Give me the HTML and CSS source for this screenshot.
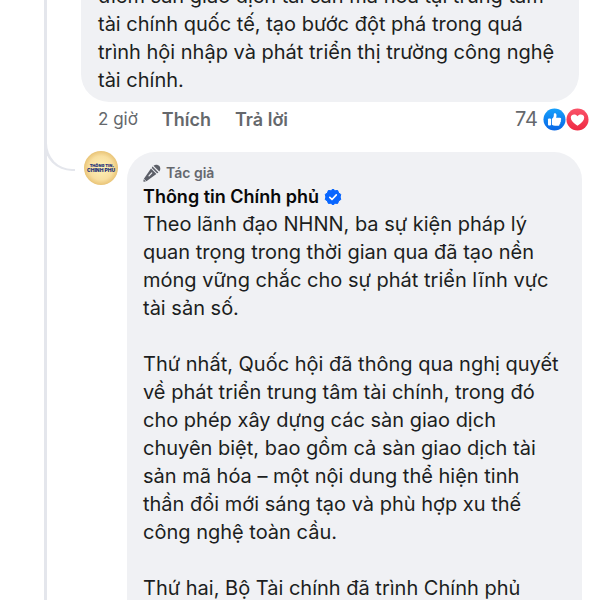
FILE: index.html
```html
<!DOCTYPE html>
<html lang="vi">
<head>
<meta charset="utf-8">
<meta name="viewport" content="width=device-width, initial-scale=1">
<title>Bình luận</title>
<link rel="stylesheet" href="styles.css">
</head>
<body>
<main class="thread">
  <article class="comment">
    <div class="bubble bubble-parent">
      <p class="text">điểm sàn giao dịch tài sản mã hóa tại trung tâm<br>tài chính quốc tế, tạo bước đột phá trong quá<br>trình hội nhập và phát triển thị trường công nghệ<br>tài chính.</p>
    </div>
    <footer class="actions">
      <time class="time">2 giờ</time>
      <button class="action" type="button">Thích</button>
      <button class="action" type="button">Trả lời</button>
      <div class="reactions">
        <span class="count">74</span>
        <svg class="reaction" viewBox="0 0 24 24" aria-hidden="true">
          <defs><linearGradient id="like" x1="0" y1="0" x2="0" y2="1"><stop offset="0" stop-color="#16a0fb"/><stop offset="1" stop-color="#0866e6"/></linearGradient></defs>
          <circle cx="12" cy="12" r="11.5" fill="url(#like)"/>
          <rect x="5.2" y="11" width="3.2" height="7.2" rx="1" fill="#fff"/>
          <path fill="#fff" d="M9.3 11.3c1.7-1.1 2-2.4 2-4.6 0-1.6 2.8-1.6 2.8 1 0 1-.2 1.7-.5 2.5h3.9c1.7 0 2 1.700.9 2.400.7.8.5 1.900-.4 2.300.4.8 0 1.700-.8 2 .3 1-.4 1.600-1.400 1.600h-3.200c-1.400 0-2.300-.3-3.300-.9z"/>
        </svg>
        <svg class="reaction" viewBox="0 0 24 24" aria-hidden="true">
          <defs><linearGradient id="love" x1="0" y1="0" x2="0" y2="1"><stop offset="0" stop-color="#fa5369"/><stop offset="1" stop-color="#ee2942"/></linearGradient></defs>
          <circle cx="12" cy="12" r="11.5" fill="url(#love)"/>
          <path fill="#fff" d="M12 18.500C7.800 15.800 5 13.200 5 10c0-3.800 5.200-4.500 7-1.300C13.800 5.500 19 6.200 19 10c0 3.200-2.800 5.800-7 8.500z"/>
        </svg>
      </div>
    </footer>
  </article>

  <article class="reply">
    <svg class="avatar" viewBox="0 0 36 36" role="img" aria-label="Thông tin Chính phủ">
      <defs><radialGradient id="gold"><stop offset="0" stop-color="#fff2b8"/><stop offset=".7" stop-color="#f8dfa0"/><stop offset="1" stop-color="#e9c477"/></radialGradient></defs>
      <circle cx="18" cy="18" r="17" fill="url(#gold)"/>
      <text class="logo-small" x="18" y="17" text-anchor="middle">THÔNG TIN</text>
      <text class="logo-large" x="18" y="22" text-anchor="middle">CHÍNH PHỦ</text>
    </svg>
    <div class="bubble bubble-reply">
      <div class="badge">
        <svg class="mic" viewBox="0 0 18 18" aria-hidden="true">
          <g fill="#5c5f68"><path d="M8 4.600 13.400 10 3.400 17.200.9 14.700z"/><path d="M8.800 3.900a5 5 0 0 1 .8-1.300l5.800 5.800a5 5 0 0 1-1.300.8z"/><path d="M10.500 1.700c2.300-1.600 4.700-.8 5.800.4s1.600 3.400 0 5.500z"/><path d="M.7 15.200 2.900 17.400.8 17.700.3 17.200z"/></g>
          <path d="m6 11.900 2.800-3" stroke="#f0f1f4" stroke-width="1.200" stroke-linecap="round"/>
        </svg>
        <span>Tác giả</span>
      </div>
      <h2 class="name">
        <a href="#">Thông tin Chính phủ</a>
        <svg class="verified" viewBox="0 0 18 18" aria-hidden="true">
          <path fill="#0866ff" stroke="#0866ff" stroke-width="1" stroke-linejoin="round" d="m9 1.200 2.100 1.500 2.600-.2.900 2.500 2.200 1.400-.7 2.600.7 2.500-2.200 1.400-.9 2.500-2.600-.1L9 16.800l-2.100-1.500-2.600.1-.9-2.500-2.200-1.400.7-2.500-.7-2.600L3.400 5l.9-2.500 2.600.2z"/>
          <path fill="none" stroke="#fff" stroke-width="1.700" stroke-linecap="round" stroke-linejoin="round" d="m5.800 9.300 2.200 2.200 4.300-4.600"/>
        </svg>
      </h2>
      <p class="text">Theo lãnh đạo NHNN, ba sự kiện pháp lý<br>quan trọng trong thời gian qua đã tạo nền<br>móng vững chắc cho sự phát triển lĩnh vực<br>tài sản số.</p>
      <p class="text">Thứ nhất, Quốc hội đã thông qua nghị quyết<br>về phát triển trung tâm tài chính, trong đó<br>cho phép xây dựng các sàn giao dịch<br>chuyên biệt, bao gồm cả sàn giao dịch tài<br>sản mã hóa – một nội dung thể hiện tinh<br>thần đổi mới sáng tạo và phù hợp xu thế<br>công nghệ toàn cầu.</p>
      <p class="text">Thứ hai, Bộ Tài chính đã trình Chính phủ</p>
    </div>
  </article>
</main>
</body>
</html>
```
FILE: styles.css
```css
* {
  box-sizing: border-box;
}

body {
  margin: 0;
  background: #fff;
  color: #1c1e21;
  font-family: Inter, "Noto Sans", sans-serif;
}

.thread {
  height: 100vh;
  margin-left: 44px;
  padding-right: 18px;
  border-left: 3px solid #e4e6ec;
  overflow: hidden;
}

.comment {
  margin: -26px 3px 0 34px;
}

.bubble {
  background: #f0f1f4;
  border-radius: 28px;
}

.bubble-parent {
  padding: 8px 17px;
}

.text {
  margin: 0;
  font-size: 20px;
  line-height: 28px;
  white-space: nowrap;
}

.text + .text {
  margin-top: 28px;
}

.actions {
  display: flex;
  align-items: center;
  gap: 24px;
  height: 34px;
  padding-left: 17px;
  color: #65686c;
  font-size: 18px;
}

.time {
  font-size: 17px;
}

.action {
  padding: 0;
  border: 0;
  background: none;
  color: inherit;
  font: inherit;
  font-weight: 600;
}

.reactions {
  display: flex;
  align-items: center;
  margin-left: auto;
  margin-right: -10px;
}

.count {
  margin-right: 5px;
  font-size: 20px;
}

.reaction {
  width: 23px;
  height: 23px;
}

.reply {
  position: relative;
  display: flex;
  align-items: flex-start;
  gap: 8px;
  margin-top: 16px;
  padding-left: 36px;
}

.reply::before {
  content: "";
  position: absolute;
  left: -3px;
  top: -22px;
  width: 28px;
  height: 39px;
  border: solid #e4e6ec;
  border-width: 0 0 2px 3px;
  border-bottom-left-radius: 28px;
}

.avatar {
  flex: none;
  width: 36px;
  height: 36px;
  margin-top: -2px;
}

.logo-small,
.logo-large {
  fill: #263579;
  font-family: Inter, sans-serif;
  font-weight: 900;
}

.logo-small {
  font-size: 4px;
}

.logo-large {
  font-size: 5px;
}

.bubble-reply {
  flex: 1;
  min-width: 0;
  padding: 10px 16px 48px;
}

.badge {
  display: flex;
  align-items: center;
  gap: 5px;
  height: 21px;
  color: #65686e;
  font-size: 14px;
  font-weight: 600;
}

.mic {
  width: 18px;
  height: 18px;
}

.name {
  display: flex;
  align-items: center;
  gap: 5px;
  height: 27px;
  margin: 0;
  font-size: 18px;
  font-weight: 600;
}

.name a {
  color: #080809;
  text-decoration: none;
}

.verified {
  width: 18px;
  height: 18px;
}
```
